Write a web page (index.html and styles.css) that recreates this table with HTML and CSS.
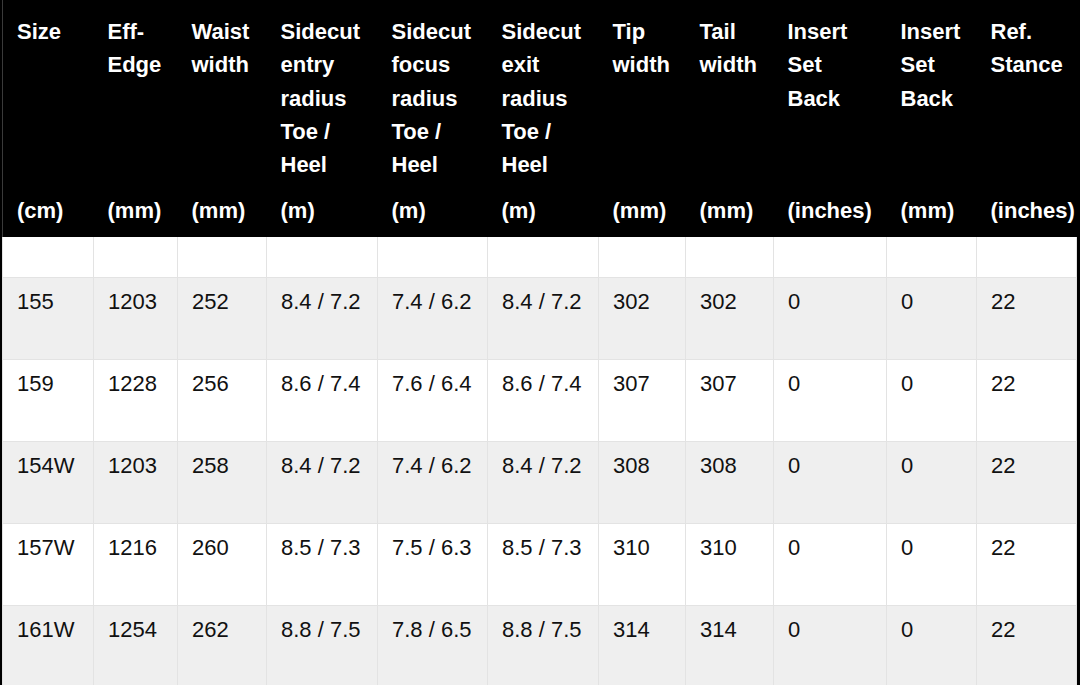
FILE: index.html
```html
<!DOCTYPE html>
<html lang="en">
<head>
<meta charset="utf-8">
<title>Snowboard sizing</title>
<link rel="stylesheet" href="styles.css">
</head>
<body>
<div class="frame">
<table class="specs">
<colgroup>
<col class="w1"><col class="w2"><col class="w3"><col class="w4"><col class="w5"><col class="w6"><col class="w7"><col class="w8"><col class="w9"><col class="w10"><col class="w11">
</colgroup>
<thead>
<tr class="names">
<th>Size</th>
<th>Eff-<br>Edge</th>
<th>Waist<br>width</th>
<th>Sidecut<br>entry<br>radius<br>Toe /<br>Heel</th>
<th>Sidecut<br>focus<br>radius<br>Toe /<br>Heel</th>
<th>Sidecut<br>exit<br>radius<br>Toe /<br>Heel</th>
<th>Tip<br>width</th>
<th>Tail<br>width</th>
<th>Insert<br>Set<br>Back</th>
<th>Insert<br>Set<br>Back</th>
<th>Ref.<br>Stance</th>
</tr>
<tr class="units">
<th>(cm)</th>
<th>(mm)</th>
<th>(mm)</th>
<th>(m)</th>
<th>(m)</th>
<th>(m)</th>
<th>(mm)</th>
<th>(mm)</th>
<th>(inches)</th>
<th>(mm)</th>
<th>(inches)</th>
</tr>
</thead>
<tbody>
<tr class="spacer">
<td></td><td></td><td></td><td></td><td></td><td></td><td></td><td></td><td></td><td></td><td></td>
</tr>
<tr class="row alt">
<td>155</td><td>1203</td><td>252</td><td>8.4 / 7.2</td><td>7.4 / 6.2</td><td>8.4 / 7.2</td><td>302</td><td>302</td><td>0</td><td>0</td><td>22</td>
</tr>
<tr class="row">
<td>159</td><td>1228</td><td>256</td><td>8.6 / 7.4</td><td>7.6 / 6.4</td><td>8.6 / 7.4</td><td>307</td><td>307</td><td>0</td><td>0</td><td>22</td>
</tr>
<tr class="row alt">
<td>154W</td><td>1203</td><td>258</td><td>8.4 / 7.2</td><td>7.4 / 6.2</td><td>8.4 / 7.2</td><td>308</td><td>308</td><td>0</td><td>0</td><td>22</td>
</tr>
<tr class="row">
<td>157W</td><td>1216</td><td>260</td><td>8.5 / 7.3</td><td>7.5 / 6.3</td><td>8.5 / 7.3</td><td>310</td><td>310</td><td>0</td><td>0</td><td>22</td>
</tr>
<tr class="row alt">
<td>161W</td><td>1254</td><td>262</td><td>8.8 / 7.5</td><td>7.8 / 6.5</td><td>8.8 / 7.5</td><td>314</td><td>314</td><td>0</td><td>0</td><td>22</td>
</tr>
</tbody>
</table>
</div>
</body>
</html>
```

FILE: styles.css
```css
html, body {
  margin: 0;
  padding: 0;
  background: #000;
}

body {
  width: 1080px;
  height: 685px;
  overflow: hidden;
  font-family: "Liberation Sans", Arial, sans-serif;
}

.frame {
  padding: 0 4px 0 2px;
}

.specs {
  width: 1074px;
  table-layout: fixed;
  border-collapse: collapse;
  font-size: 22px;
}

.w1 { width: 91px; }
.w2 { width: 84px; }
.w3 { width: 89px; }
.w4 { width: 111px; }
.w5 { width: 110px; }
.w6 { width: 111px; }
.w7 { width: 87px; }
.w8 { width: 88px; }
.w9 { width: 113px; }
.w10 { width: 90px; }
.w11 { width: 100px; }

.specs th {
  background: #000;
  color: #fff;
  font-weight: bold;
  text-align: left;
  vertical-align: top;
  line-height: 33.3px;
  padding: 0 0 0 14px;
  white-space: nowrap;
}

.names th {
  height: 181px;
  padding-top: 15px;
  box-sizing: border-box;
}

.names th:first-child,
.units th:first-child {
  border-left: 1px solid #3a3a3a;
}

.units th {
  padding-top: 13px;
  padding-bottom: 9px;
  height: 55px;
  box-sizing: border-box;
}

.specs td {
  background: #fff;
  color: #111;
  text-align: left;
  vertical-align: top;
  line-height: 33px;
  padding: 7px 0 0 14px;
  border: 1px solid #e3e3e3;
  white-space: nowrap;
}

.specs tbody tr:first-child td {
  border-top: none;
}

.spacer td {
  height: 41px;
  padding: 0;
  box-sizing: border-box;
}

.row td {
  height: 82px;
  box-sizing: border-box;
}

.row.alt td {
  background: #efefef;
}
```
